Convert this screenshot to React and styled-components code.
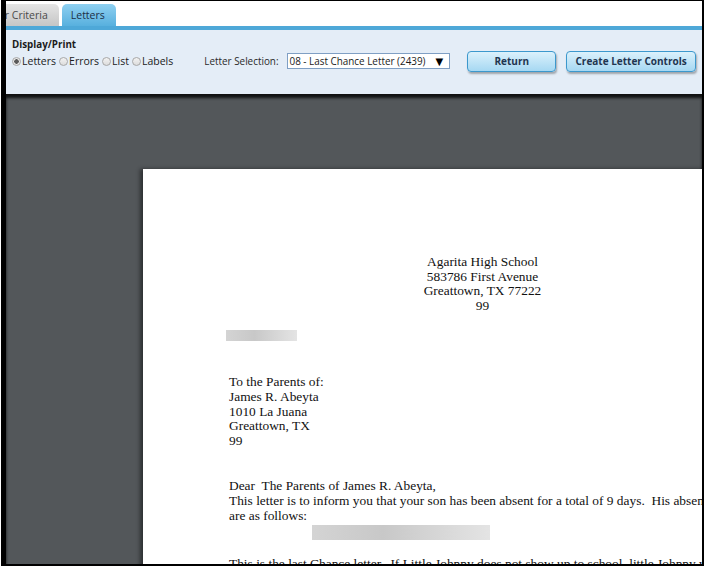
import styled, { createGlobalStyle } from 'styled-components'

const GlobalStyle = createGlobalStyle`
	html, body {
		margin: 0;
		padding: 0;
		background: #ffffff;
	}
	* {
		box-sizing: border-box;
	}
`

const uiFont = `"Open Sans", "DejaVu Sans", sans-serif`
const letterFont = `"Liberation Serif", "Times New Roman", serif`

function Radio({ label, checked }) {
	return (
		<RadioItem>
			<RadioDot $checked={checked} />
			{label}
		</RadioItem>
	)
}

function App() {
	return (
		<>
			<GlobalStyle />
			<Screen>
				<Frame>
					<TabStrip>
						<Tab $hidden>Letter Criteria</Tab>
						<Tab $active>Letters</Tab>
					</TabStrip>
					<Panel>
						<PanelTitle>Display/Print</PanelTitle>
						<ControlRow>
							<RadioGroup>
								<Radio label="Letters" checked />
								<Radio label="Errors" />
								<Radio label="List" />
								<Radio label="Labels" />
							</RadioGroup>
							<SelectionLabel>Letter Selection:</SelectionLabel>
							<SelectBox>
								<span>08 - Last Chance Letter (2439)</span>
								<Arrow>▼</Arrow>
							</SelectBox>
							<ActionButton $width={89}>Return</ActionButton>
							<ActionButton $width={130}>Create Letter Controls</ActionButton>
						</ControlRow>
					</Panel>
					<Viewer>
						<Page>
							<Header>
								<Line>Agarita High School</Line>
								<Line>583786 First Avenue</Line>
								<Line>Greattown, TX 77222</Line>
								<Line>99</Line>
							</Header>
							<Redacted $width={71} $height={11} $left={-3} $top={17} />
							<Block $top={34}>
								<Line>To the Parents of:</Line>
								<Line>James R. Abeyta</Line>
								<Line>1010 La Juana</Line>
								<Line>Greattown, TX</Line>
								<Line>99</Line>
							</Block>
							<Block $top={31}>
								<Line>Dear&nbsp; The Parents of James R. Abeyta,</Line>
								<Line>This letter is to inform you that your son has been absent for a total of 9 days.&nbsp; His absences</Line>
								<Line>are as follows:</Line>
							</Block>
							<Redacted $width={178} $height={15} $left={83} $top={2} />
							<Block $top={17}>
								<Line>This is the last Chance letter.&nbsp; If Little Johnny does not show up to school, little Johnny will</Line>
							</Block>
						</Page>
					</Viewer>
				</Frame>
			</Screen>
		</>
	)
}

export default App

const Screen = styled.div`
	width: 704px;
	height: 566px;
	padding-left: 1px;
	background: #ffffff;
	overflow: hidden;
`

const Frame = styled.div`
	height: 100%;
	display: flex;
	flex-direction: column;
	border-left: 5px solid #000000;
	border-top: 1px solid #000000;
	border-right: 2px solid #000000;
	border-bottom: 2px solid #000000;
	overflow: hidden;
	font-family: ${uiFont};
`

const TabStrip = styled.div`
	height: 29px;
	display: flex;
	align-items: flex-end;
	gap: 3px;
	padding-top: 3px;
	background: #ffffff;
	border-bottom: 4px solid #4ea8d8;
	overflow: hidden;
	flex-shrink: 0;
`

const Tab = styled.div`
	height: 22px;
	display: flex;
	align-items: center;
	padding: 0 11px 0 9px;
	font-size: 10.5px;
	white-space: nowrap;
	color: ${({ $active }) => ($active ? '#1c2f45' : '#4a4a4a')};
	border-radius: 5px 5px 0 0;
	background: ${({ $active }) =>
		$active
			? 'linear-gradient(#8ed0f1, #58b0de)'
			: 'linear-gradient(#e4e4e4, #c6c6c6)'};
	margin-left: ${({ $hidden }) => ($hidden ? '-35px' : '0')};
	flex-shrink: 0;
`

const Panel = styled.div`
	height: 64px;
	flex-shrink: 0;
	background: #e4edf7;
	padding: 8px 6px 0 6px;
`

const PanelTitle = styled.div`
	font-size: 9.8px;
	font-weight: bold;
	color: #1b1b1b;
	line-height: 13px;
`

const ControlRow = styled.div`
	display: flex;
	align-items: center;
	height: 22px;
	margin-top: -1px;
	white-space: nowrap;
`

const RadioGroup = styled.div`
	display: flex;
	align-items: center;
	gap: 3px;
`

const RadioItem = styled.label`
	display: flex;
	align-items: center;
	font-size: 10.5px;
	color: #1b1b1b;
`

const RadioDot = styled.span`
	width: 9px;
	height: 9px;
	border-radius: 50%;
	border: 1px solid #a8a8a8;
	background: ${({ $checked }) =>
		$checked
			? 'radial-gradient(circle, #5a5a5a 0 2px, #e8e8e8 2.5px)'
			: 'linear-gradient(#f2f2f2, #dcdcdc)'};
	margin-right: 1px;
`

const SelectionLabel = styled.span`
	font-size: 9.9px;
	color: #2a2a2a;
	margin-left: 31px;
`

const SelectBox = styled.div`
	width: 164px;
	height: 16px;
	margin-left: 8px;
	display: flex;
	align-items: center;
	justify-content: space-between;
	padding: 0 6px 0 2px;
	background: #ffffff;
	border: 1px solid #7f9fc4;
	font-size: 9.9px;
	color: #1b1b1b;
`

const Arrow = styled.span`
	font-size: 10px;
	color: #000000;
`

const ActionButton = styled.button`
	width: ${({ $width }) => $width}px;
	height: 21px;
	margin-left: ${({ $width }) => ($width < 100 ? '17px' : '10px')};
	padding: 0;
	font-family: ${uiFont};
	font-size: 10px;
	font-weight: bold;
	color: #1f3550;
	border: 1px solid #3c98cd;
	border-radius: 4px;
	background: linear-gradient(#dbf1fc, #a6d8f2);
	box-shadow: 1px 2px 2px rgba(0, 0, 0, 0.3);
	cursor: pointer;
`

const Viewer = styled.div`
	flex: 1;
	background: #53575a;
	box-shadow: inset 0 3px 3px rgba(0, 0, 0, 0.8);
	padding: 74px 0 0 137px;
	overflow: hidden;
	border-top: 1px solid #111111;
`

const Page = styled.div`
	width: 678px;
	min-height: 600px;
	background: #ffffff;
	box-shadow: -3px 0 4px rgba(0, 0, 0, 0.45);
	padding: 86px 0 0 86px;
	font-family: ${letterFont};
	font-size: 13.4px;
	line-height: 14.6px;
	color: #111111;
`

const Header = styled.div`
	width: 507px;
	text-align: center;
`

const Line = styled.div`
	white-space: nowrap;
`

const Block = styled.div`
	margin-top: ${({ $top }) => $top}px;
`

const Redacted = styled.div`
	width: ${({ $width }) => $width}px;
	height: ${({ $height }) => $height}px;
	margin: ${({ $top }) => $top}px 0 0 ${({ $left }) => $left}px;
	background: linear-gradient(90deg, #d4d4d4, #c8c8c8 40%, #d6d6d6 70%, #e4e4e4);
	filter: blur(0.6px);
`
